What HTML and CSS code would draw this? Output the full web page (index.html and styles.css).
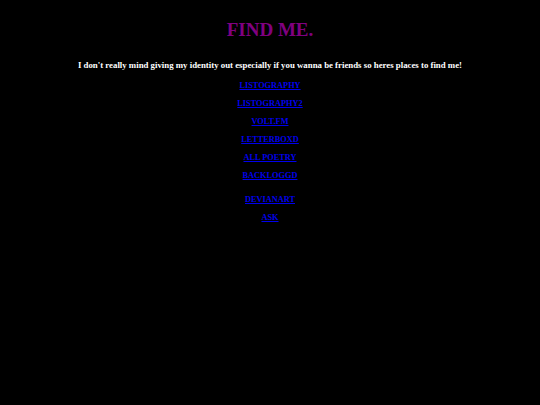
FILE: index.html
```html
<!DOCTYPE html>
<html>
<head>
<meta charset="utf-8">
<link rel="stylesheet" href="styles.css">
</head>
<body>
<main class="page">
  <h1 class="title">FIND ME.</h1>
  <p class="intro">I don't really mind giving my identity out especially if you wanna be friends so heres places to find me!</p>
  <ul class="links">
    <li><a href="#">LISTOGRAPHY</a></li>
    <li><a href="#">LISTOGRAPHY2</a></li>
    <li><a href="#">VOLT.FM</a></li>
    <li><a href="#">LETTERBOXD</a></li>
    <li><a href="#">ALL POETRY</a></li>
    <li><a href="#">BACKLOGGD</a></li>
  </ul>
  <ul class="links links-second">
    <li><a href="#">DEVIANART</a></li>
    <li><a href="#">ASK</a></li>
  </ul>
</main>
</body>
</html>
```

FILE: styles.css
```css
html, body {
  margin: 0;
  padding: 0;
  background: #000;
}
body {
  width: 540px;
  height: 405px;
  font-family: "Liberation Serif", "Times New Roman", serif;
  font-weight: bold;
  color: #fff;
}
.page {
  display: flex;
  flex-direction: column;
  align-items: center;
  padding-top: 19px;
}
.title {
  margin: 0;
  font-size: 19px;
  line-height: 22px;
  color: #800080;
  font-weight: bold;
}
.intro {
  margin: 18px 0 0;
  font-size: 8.8px;
  line-height: 12px;
}
.links {
  list-style: none;
  margin: 10px 0 0;
  padding: 0;
  display: flex;
  flex-direction: column;
  align-items: center;
  gap: 8px;
}
.links li {
  font-size: 8.3px;
  line-height: 10px;
}
.links a {
  color: #0000ee;
  text-decoration: underline;
}
.links-second {
  margin-top: 14px;
}
```
